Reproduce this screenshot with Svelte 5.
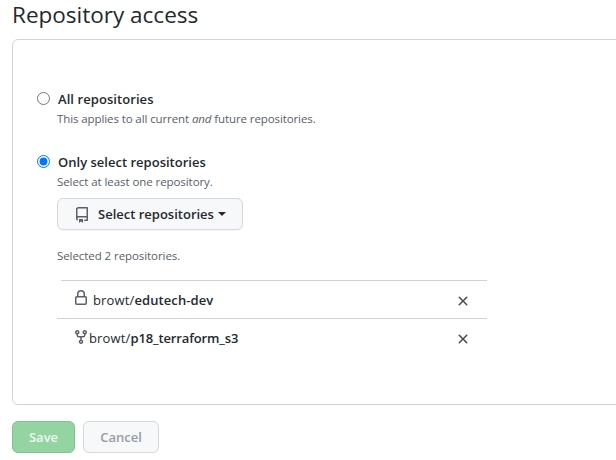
<script>
  const repos = [
    { owner: 'browt', name: 'edutech-dev', icon: 'lock' },
    { owner: 'browt', name: 'p18_terraform_s3', icon: 'fork' }
  ];
  let access = $state('selected');
</script>

<main>
  <h1>Repository access</h1>
  <section class="card">
    <label class="option">
      <input type="radio" name="access" value="all" bind:group={access} />
      <span class="title all">All repositories</span>
    </label>
    <p class="note applies">This applies to all current <em>and</em> future repositories.</p>

    <label class="option second">
      <input type="radio" name="access" value="selected" bind:group={access} />
      <span class="title">Only select repositories</span>
    </label>
    <p class="note">Select at least one repository.</p>

    <button class="btn picker" type="button">
      <svg class="book" width="16" height="16" viewBox="0 0 16 16"><path fill-rule="evenodd" d="M2 2.5A2.5 2.5 0 014.500 0h8.750a.75.75 0 01.75.75v12.500a.75.75 0 01-.75.75h-2.500a.75.75 0 110-1.500h1.750v-2h-8a1 1 0 00-.714 1.700.75.75 0 01-1.072 1.050A2.495 2.495 0 012 11.500v-9zm10.500-1V9h-8c-.356 0-.694.074-1 .208V2.500a1 1 0 011-1h8zM5 12.250v3.250a.25.25 0 00.4.2l1.450-1.087a.25.25 0 01.3 0L8.600 15.700a.25.25 0 00.4-.2v-3.250a.25.25 0 00-.25-.25h-3.500a.25.25 0 00-.25.25z" /></svg>
      <span>Select repositories</span>
      <i class="caret"></i>
    </button>

    <p class="note count">Selected 2 repositories.</p>

    <ul>
      {#each repos as repo}
        <li class={repo.icon}>
          {#if repo.icon === 'lock'}
            <svg class="kind" width="16" height="16" viewBox="0 0 16 16"><path fill-rule="evenodd" d="M4 4v2h-.25A1.750 1.750 0 002 7.750v5.500c0 .966.784 1.750 1.750 1.750h8.500A1.750 1.750 0 0014 13.250v-5.500A1.750 1.750 0 0012.250 6H12V4a4 4 0 10-8 0zm6.500 2V4a2.500 2.500 0 10-5 0v2h5zM3.750 7.500h8.500a.25.25 0 01.25.25v5.500a.25.25 0 01-.25.25h-8.500a.25.25 0 01-.25-.25v-5.500a.25.25 0 01.25-.25z" /></svg>
          {:else}
            <svg class="kind" width="16" height="16" viewBox="0 0 16 16"><path fill-rule="evenodd" d="M5 3.250a.75.75 0 11-1.500 0 .75.75 0 011.500 0zm0 2.122a2.250 2.250 0 10-1.500 0v.878A2.250 2.250 0 005.750 8.500h1.500v2.128a2.251 2.251 0 101.500 0V8.500h1.500a2.250 2.250 0 002.250-2.250v-.878a2.250 2.250 0 10-1.500 0v.878a.75.75 0 01-.75.75h-4.500A.75.75 0 015 6.250v-.878zm3.750 7.378a.75.75 0 11-1.500 0 .75.75 0 011.500 0zm3-8.750a.75.75 0 100-1.500.75.75 0 000 1.500z" /></svg>
          {/if}
          <span class="name"><span class="owner">{repo.owner}/</span><b>{repo.name}</b></span>
          <button class="remove" type="button" aria-label="Remove {repo.name}">
            <svg width="16" height="16" viewBox="0 0 16 16"><path fill-rule="evenodd" d="M3.720 3.720a.75.75 0 011.060 0L8 6.940l3.220-3.220a.75.75 0 111.060 1.060L9.060 8l3.220 3.220a.75.75 0 11-1.060 1.060L8 9.060l-3.220 3.220a.75.75 0 01-1.060-1.060L6.940 8 3.720 4.780a.75.75 0 010-1.060z" /></svg>
          </button>
        </li>
      {/each}
    </ul>
  </section>
  <div class="actions">
    <button class="btn save" type="button"><span>Save</span></button>
    <button class="btn cancel" type="button"><span>Cancel</span></button>
  </div>
</main>

<style>
  :global(body) { background: #fff; overflow: hidden; }
  main {
    box-sizing: border-box;
    width: 640px;
    height: 460px;
    padding-left: 12px;
    font-family: "Open Sans", "Noto Sans", sans-serif;
    font-size: 13px;
    line-height: 20px;
    color: #24292e;
    white-space: nowrap;
  }
  h1, p, ul { margin: 0; padding: 0; }
  h1 {
    height: 39px;
    font-size: 22.5px;
    line-height: 30px;
    font-weight: 400;
    letter-spacing: 0;
  }
  .card {
    box-sizing: border-box;
    height: 366px;
    padding: 49px 0 0 24px;
    border: 1px solid #d1d5da;
    border-radius: 6px;
  }
  .option { display: flex; align-items: center; height: 20px; }
  .option.second { margin-top: 24px; }
  input { width: 13px; height: 13px; margin: 0 8px 1px 0; }
  .title { font-weight: 600; letter-spacing: 0.01px; }
  .title.all { letter-spacing: 0.07px; }
  .note {
    height: 19px;
    margin-left: 20px;
    font-size: 11.5px;
    line-height: 19px;
    color: #586069;
    letter-spacing: -0.07px;
  }
  .note.applies { letter-spacing: -0.1px; }
  .btn {
    display: flex;
    align-items: center;
    box-sizing: border-box;
    height: 32px;
    padding: 0;
    border: 1px solid #d5d8da;
    border-radius: 6px;
    background: #f6f8fa;
    color: #24292e;
    font: 600 13px/20px "Open Sans", "Noto Sans", sans-serif;
    letter-spacing: 0;
  }
  .picker { width: 186px; margin: 7px 0 0 20px; padding-left: 16px; box-shadow: 0 1px 0 rgba(27, 31, 35, 0.04); }
  .book { margin: 2px 8px 0 0; fill: #586069; }
  .caret {
    margin-left: 4px;
    border: 4px solid transparent;
    border-top-color: #24292e;
    border-bottom: 0;
  }
  .count { margin-top: 16px; }
  ul { width: 430px; margin: 15px 0 0 20px; list-style: none; }
  li { display: flex; align-items: center; box-sizing: border-box; height: 38px; padding: 1px 16px 0; }
  .lock { background: linear-gradient(#cbd3db, #cbd3db) 4px 0 / 100% 1px no-repeat; }
  .fork { border-top: 1px solid #cbd3db; padding-top: 0; }
  .kind { margin-bottom: 3px; fill: #586069; }
  .fork .kind { margin-bottom: 1px; }
  .lock .name { margin-left: 4px; }
  .name { flex: 1; }
  .owner { letter-spacing: 0.15px; }
  .name b { font-weight: 600; letter-spacing: 0.08px; }
  .fork b { letter-spacing: -0.13px; }
  .remove { display: flex; margin-top: 2px; padding: 0; border: 0; background: none; fill: #444d56; }
  .actions { display: flex; gap: 8px; margin-top: 16px; }
  .save, .cancel { justify-content: center; }
  .save { width: 63px; border-color: #83c092; background: #94d3a2; color: #eef8f0; }
  .cancel { width: 76px; color: #959da5; }
</style>
